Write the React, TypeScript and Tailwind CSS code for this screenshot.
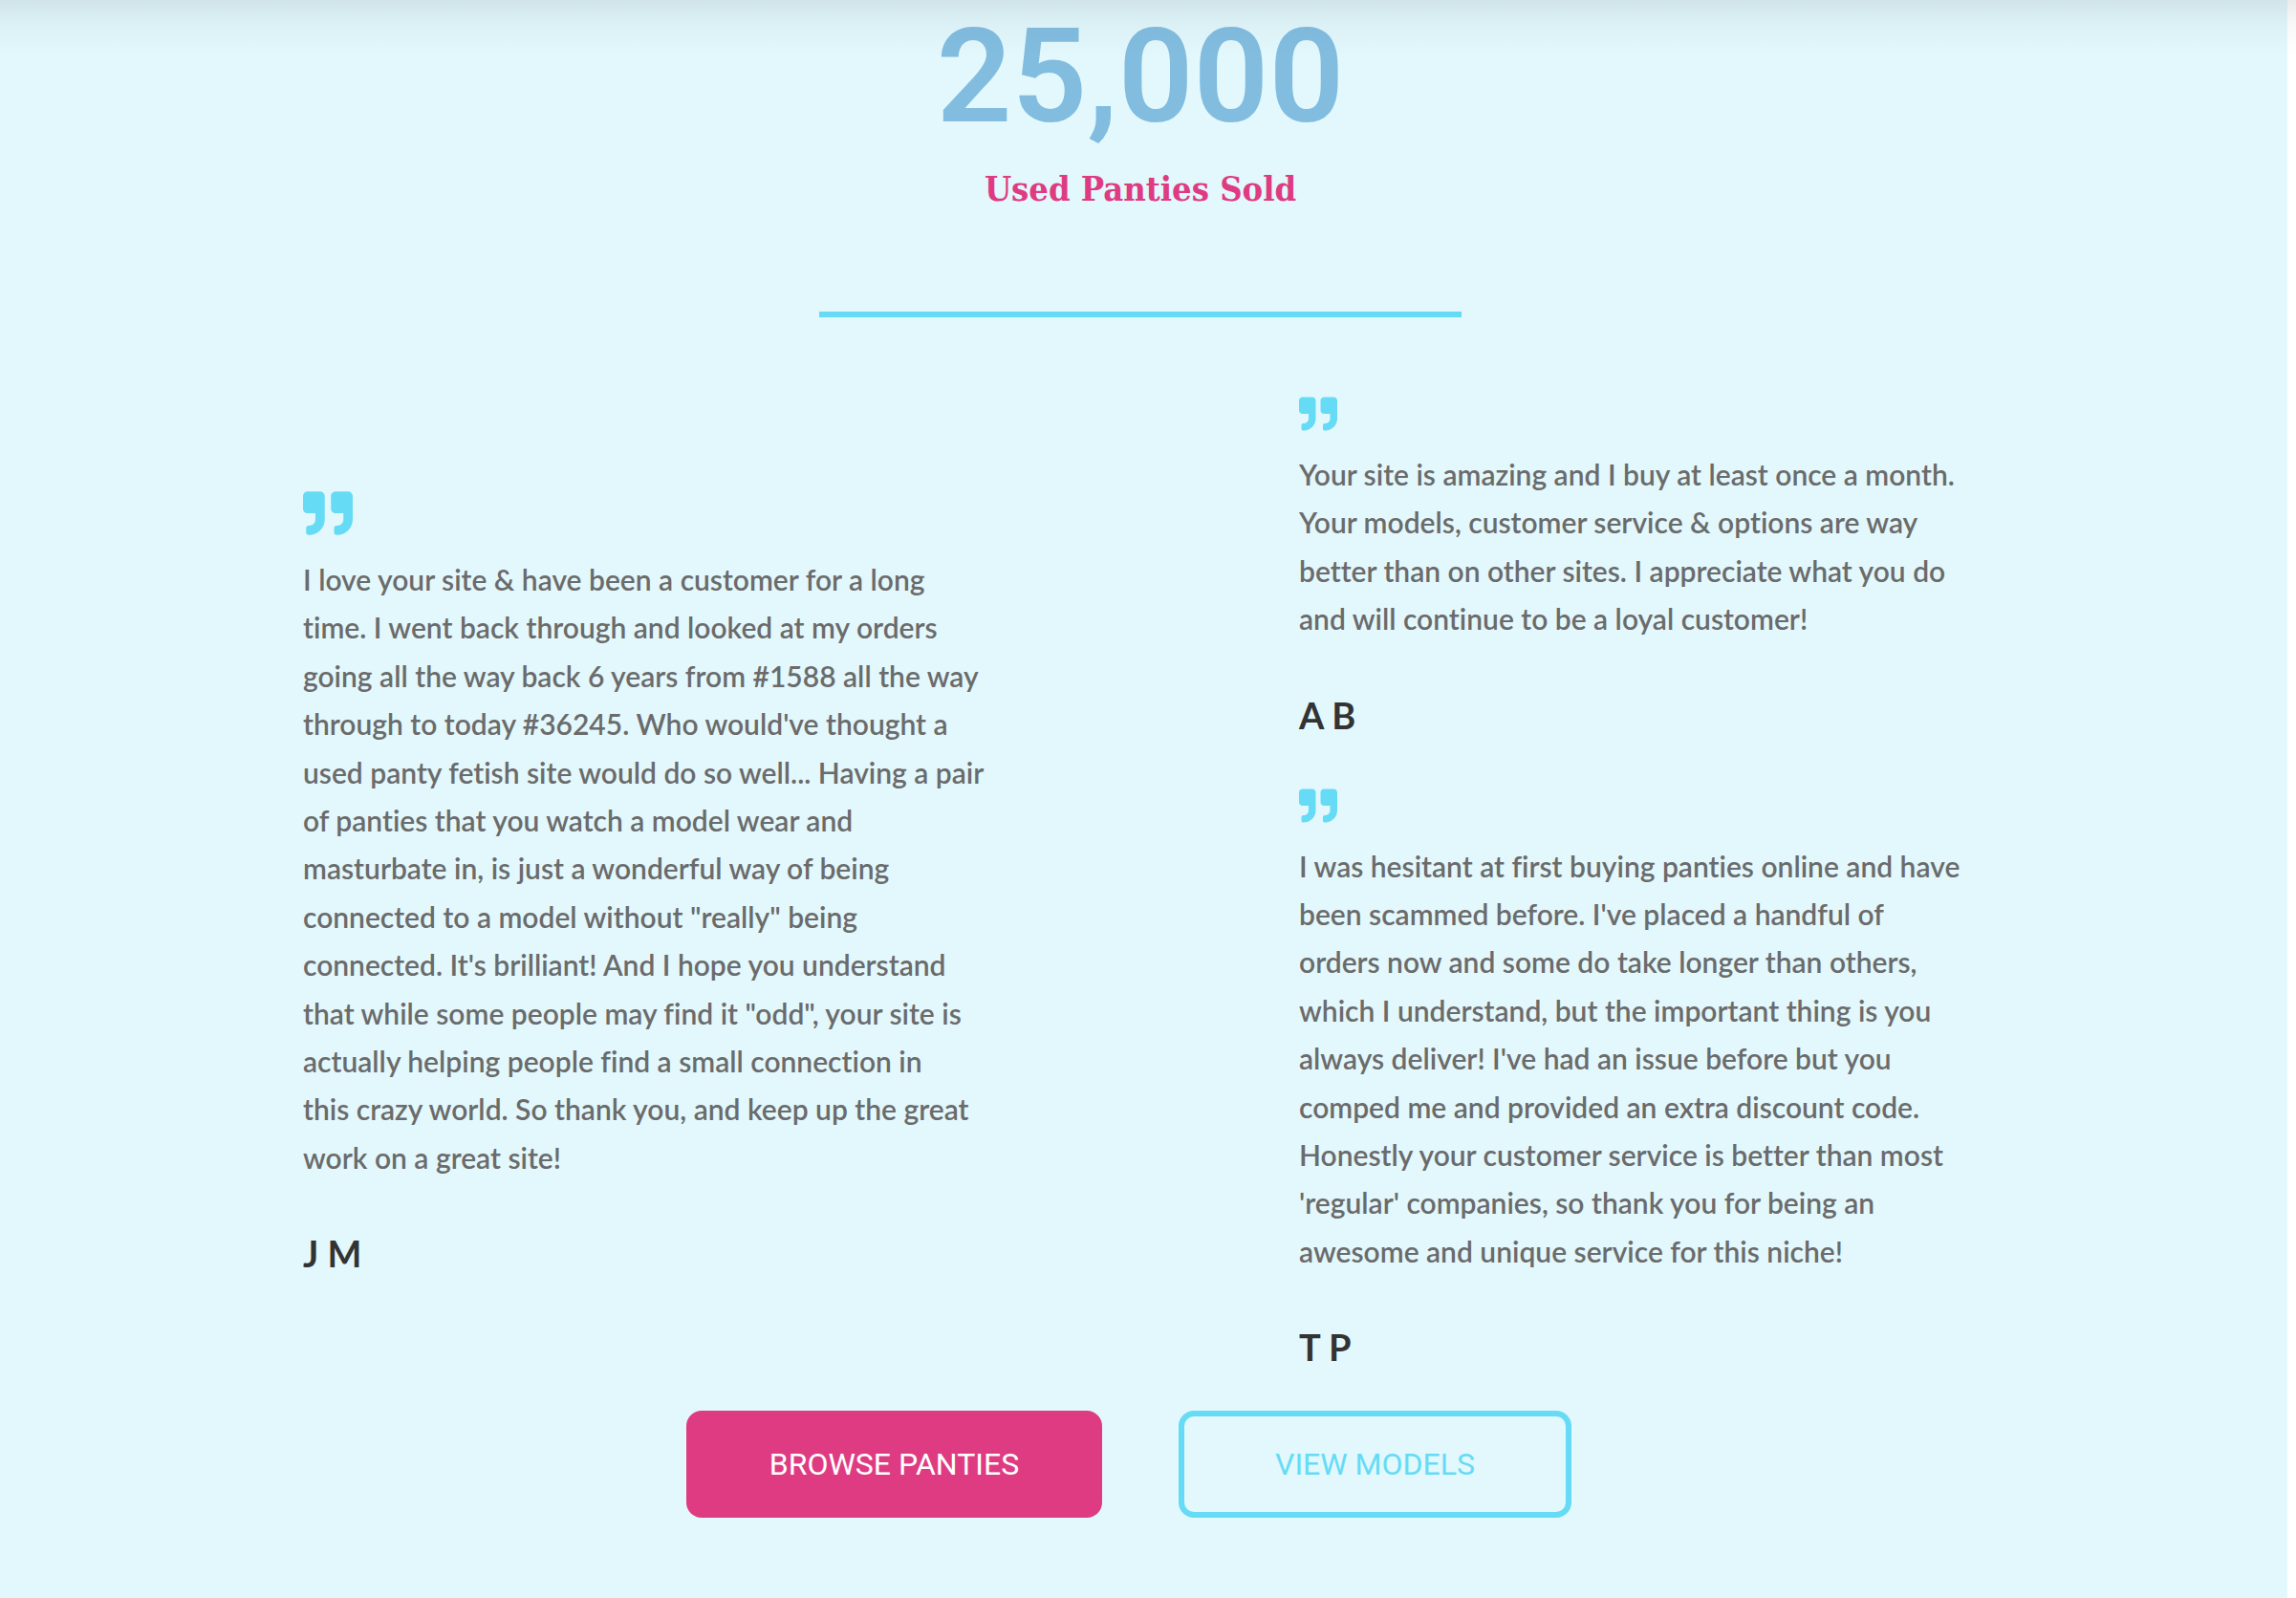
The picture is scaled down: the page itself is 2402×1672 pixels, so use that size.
type QuoteProps = {
  lines: string[];
  author: string;
  large?: boolean;
};

function QuoteMark({ large }: { large?: boolean }) {
  return (
    <svg
      viewBox="0 0 512 512"
      fill="currentColor"
      aria-hidden="true"
      className={large ? "size-[52px] text-[#66dbf5]" : "size-10 text-[#66dbf5]"}
    >
      <path d="M464 32H336c-26.5 0-48 21.5-48 48v128c0 26.5 21.5 48 48 48h80v64c0 35.3-28.7 64-64 64h-8c-13.3 0-24 10.7-24 24v48c0 13.3 10.7 24 24 24h8c88.4 0 160-71.6 160-160V80c0-26.5-21.5-48-48-48zm-288 0H48C21.5 32 0 53.5 0 80v128c0 26.5 21.5 48 48 48h80v64c0 35.3-28.7 64-64 64h-8c-13.3 0-24 10.7-24 24v48c0 13.3 10.7 24 24 24h8c88.4 0 160-71.6 160-160V80c0-26.5-21.5-48-48-48z" />
    </svg>
  );
}

function Testimonial({ lines, author, large }: QuoteProps) {
  return (
    <figure>
      <QuoteMark large={large} />
      <blockquote className="mt-[18px] text-[30px] leading-[1.68] font-semibold whitespace-nowrap text-[#6b6b6b] [font-variant-ligatures:none]">
        {lines.map((line) => (
          <span key={line} className="block">
            {line}
          </span>
        ))}
      </blockquote>
      <figcaption className="mt-[52px] text-[38px] leading-[46px] font-bold text-[#333333]">
        {author}
      </figcaption>
    </figure>
  );
}

const longStory = [
  "I love your site & have been a customer for a long",
  "time. I went back through and looked at my orders",
  "going all the way back 6 years from #1588 all the way",
  "through to today #36245. Who would've thought a",
  "used panty fetish site would do so well... Having a pair",
  "of panties that you watch a model wear and",
  "masturbate in, is just a wonderful way of being",
  'connected to a model without "really" being',
  "connected. It's brilliant! And I hope you understand",
  'that while some people may find it "odd", your site is',
  "actually helping people find a small connection in",
  "this crazy world. So thank you, and keep up the great",
  "work on a great site!",
];

const loyalCustomer = [
  "Your site is amazing and I buy at least once a month.",
  "Your models, customer service & options are way",
  "better than on other sites. I appreciate what you do",
  "and will continue to be a loyal customer!",
];

const firstTimeBuyer = [
  "I was hesitant at first buying panties online and have",
  "been scammed before. I've placed a handful of",
  "orders now and some do take longer than others,",
  "which I understand, but the important thing is you",
  "always deliver! I've had an issue before but you",
  "comped me and provided an extra discount code.",
  "Honestly your customer service is better than most",
  "'regular' companies, so thank you for being an",
  "awesome and unique service for this niche!",
];

export default function App() {
  return (
    <div className="relative min-h-screen bg-white pr-[9px] font-['Lato',sans-serif]">
      <main className="min-h-screen bg-[#e2f8fd] pt-[11px] pr-[7px]">
        <section className="text-center">
          <p className="font-['Roboto',sans-serif] text-[138px] leading-[138px] font-semibold text-[#82bde0]">
            25,000
          </p>
          <h2 className="mt-6 font-['DejaVu_Serif_Condensed','DejaVu_Serif',serif] text-[36px] leading-[48px] font-bold text-[#df3b82]">
            Used Panties Sold
          </h2>
        </section>

        <hr className="mx-auto mt-[105px] h-[6px] w-[672px] max-w-full border-0 bg-[#66dbf5]" />

        <section className="mx-auto mt-[81px] grid max-w-[1752px] grid-cols-2 items-center gap-[332px]">
          <Testimonial lines={longStory} author="J M" large />
          <div className="flex flex-col gap-[52px]">
            <Testimonial lines={loyalCustomer} author="A B" />
            <Testimonial lines={firstTimeBuyer} author="T P" />
          </div>
        </section>

        <nav className="mt-[44px] grid grid-cols-2 gap-20 font-['Roboto',sans-serif] text-[32px] leading-[46px]">
          <a
            href="#panties"
            className="flex h-28 w-[435px] items-center justify-center justify-self-end rounded-2xl bg-[#df3b82] text-white"
          >
            BROWSE PANTIES
          </a>
          <a
            href="#models"
            className="flex h-28 w-[411px] items-center justify-center rounded-2xl border-6 border-[#66dbf5] text-[#66dbf5]"
          >
            VIEW MODELS
          </a>
        </nav>
      </main>
      <div className="pointer-events-none absolute inset-x-0 top-0 h-[60px] bg-linear-to-b from-black/8 via-black/3 via-40% to-transparent" />
    </div>
  );
}
